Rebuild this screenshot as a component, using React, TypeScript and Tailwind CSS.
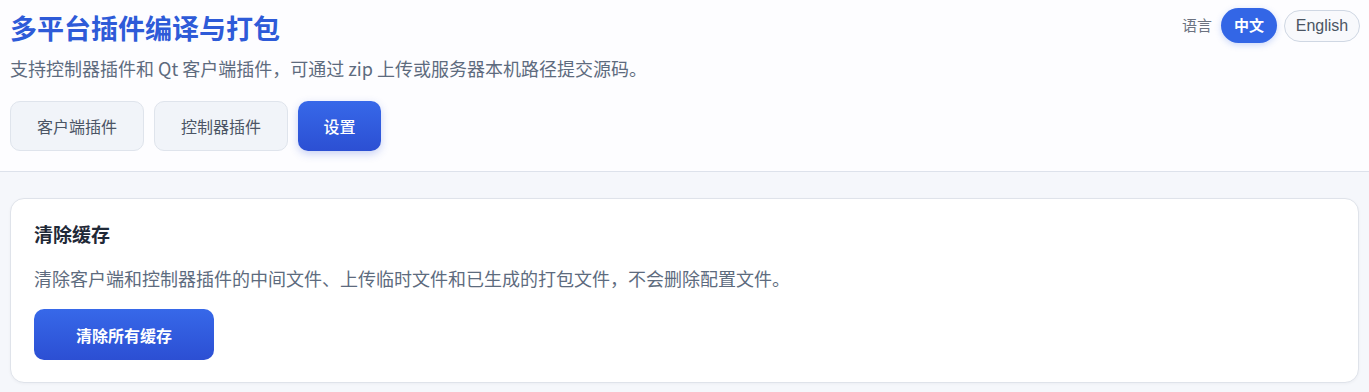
import React from 'react';

const tabs = ['客户端插件', '控制器插件', '设置'];

export default function App() {
  const active = 2;
  return (
    <div className="min-h-[392px] bg-[#f5f7fb] font-['Noto_Sans_CJK_SC','Noto_Sans',sans-serif]">
      <header className="border-b border-[#dde2eb] bg-[#fdfdff] px-[10px] pt-[10px] pb-[20px]">
        <div className="flex items-start justify-between">
          <div>
            <h1 className="text-[27px] font-bold leading-[35px] text-[#2e5bd8]">多平台插件编译与打包</h1>
            <p className="mt-[10px] text-[18px] leading-[26px] text-[#5d6b7e]">
              支持控制器插件和 Qt 客户端插件，可通过 zip 上传或服务器本机路径提交源码。
            </p>
          </div>
          <div className="mt-[-2px] mr-[-1px] flex items-center gap-[7px]">
            <span className="mr-[2px] text-[15px] text-[#6b7280]">语言</span>
            <button className="h-[35px] w-[56px] rounded-full bg-[#3366e6] text-[15px] font-semibold text-white shadow-[0_2px_6px_rgba(51,102,230,0.25)]">
              中文
            </button>
            <button className="h-[32px] w-[76px] rounded-full border border-[#cfd7e3] bg-[#f8f9fc] font-['Liberation_Sans',sans-serif] text-[16px] text-[#4b5563]">
              English
            </button>
          </div>
        </div>
        <nav className="mt-[20px] flex gap-[10px]">
          {tabs.map((t, i) =>
            i === active ? (
              <button
                key={t}
                className="h-[50px] w-[83px] rounded-[10px] bg-gradient-to-b from-[#3768e9] to-[#2c4fd3] text-[16px] font-medium text-white shadow-[0_3px_8px_rgba(44,79,211,0.25)]"
              >
                {t}
              </button>
            ) : (
              <button
                key={t}
                className="h-[50px] rounded-[10px] border border-[#dfe4ec] bg-[#f1f4f9] px-[26px] text-[16px] text-[#4b5565]"
              >
                {t}
              </button>
            )
          )}
        </nav>
      </header>
      <main className="px-[10px] pt-[26px] pb-[10px]">
        <section className="rounded-[14px] border border-[#dfe3ea] bg-white px-[23px] pt-[21px] pb-[22px] shadow-[0_1px_3px_rgba(15,23,42,0.04)]">
          <h2 className="text-[19px] font-bold leading-[28px] text-[#1f2937]">清除缓存</h2>
          <p className="mt-[16px] text-[18px] leading-[28px] text-[#5d6b7e]">
            清除客户端和控制器插件的中间文件、上传临时文件和已生成的打包文件，不会删除配置文件。
          </p>
          <button className="mt-[17px] h-[51px] w-[180px] rounded-[10px] bg-gradient-to-b from-[#3768e9] to-[#2c4fd3] text-[16px] font-bold text-white">
            清除所有缓存
          </button>
        </section>
      </main>
    </div>
  );
}
